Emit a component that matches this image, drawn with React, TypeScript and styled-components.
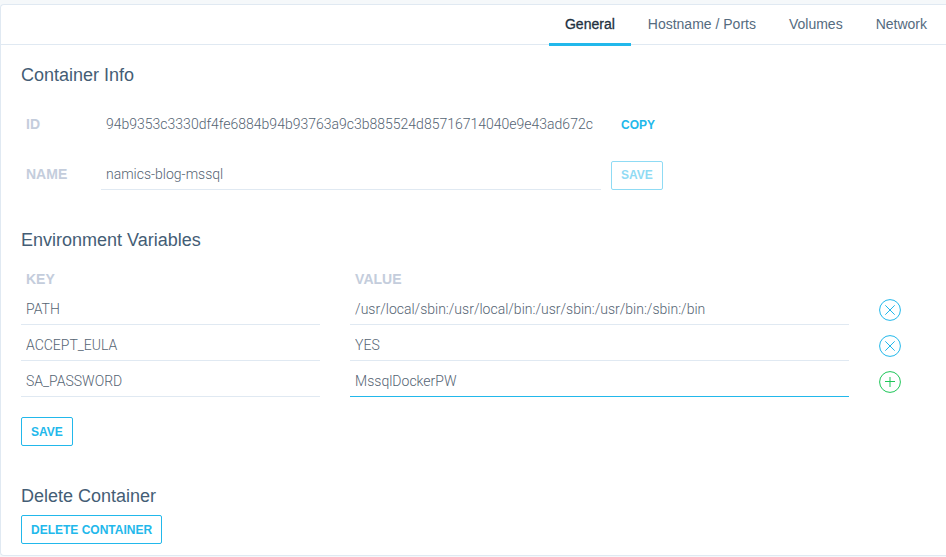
import React, { useState } from "react";
import styled, { createGlobalStyle, css } from "styled-components";

const colors = {
  page: "#f5f8fa",
  line: "#e0e9f2",
  accent: "#22b8eb",
  add: "#1fc659",
  heading: "#445d75",
  label: "#c4cddc",
  text: "#556473",
};

const GlobalStyle = createGlobalStyle`
  *, *::before, *::after { box-sizing: border-box; }
  body {
    margin: 0;
    background: ${colors.page};
    color: ${colors.text};
    font: 14px/20px "Liberation Sans", Arial, sans-serif;
  }
`;

const Card = styled.main`
  margin-top: 4px;
  background: #fff;
  border: 1px solid ${colors.line};
  border-right: 0;
  border-radius: 4px 0 0 4px;
`;

const TabBar = styled.nav`
  display: flex;
  justify-content: flex-end;
  gap: 1px;
  height: 40px;
  padding-right: 3px;
  border-bottom: 1px solid ${colors.line};
`;

const Tab = styled.a<{ $active?: boolean }>`
  height: 41px;
  padding: 9px 16px 0;
  border-bottom: 3px solid ${(p) => (p.$active ? colors.accent : "transparent")};
  color: ${(p) => (p.$active ? "#22313f" : "#556b80")};
  -webkit-text-stroke: ${(p) => (p.$active ? "0.3px" : "0")} currentColor;
  text-decoration: none;
  white-space: nowrap;
`;

const Content = styled.div`
  display: flex;
  flex-direction: column;
  align-items: flex-start;
  padding: 18px 45px 11px 20px;
`;

const Heading = styled.h2`
  margin: 0;
  color: ${colors.heading};
  font-size: 18px;
  font-weight: 400;
  line-height: 24px;
`;

const InfoGrid = styled.div`
  display: grid;
  grid-template-columns: 80px minmax(0, 500px) auto;
  align-items: center;
  row-gap: 21px;
  width: 100%;
  margin: 23px 0 38px;
`;

const labelText = css`
  color: ${colors.label};
  font-size: 14px;
  font-weight: 700;
  line-height: 20px;
  text-align: left;
`;

const Label = styled.label`
  ${labelText}
  padding: 0 0 2px 5px;
`;

const valueText = css`
  color: ${colors.text};
  font-family: Roboto, "Liberation Sans", sans-serif;
  font-size: 14px;
  font-weight: 300;
  line-height: 20px;
`;

const IdValue = styled.output`
  ${valueText}
  padding: 0 5px 2px;
`;

const Field = styled.input`
  ${valueText}
  display: block;
  width: 100%;
  height: 30px;
  padding: 0 5px 2px;
  border: 0;
  border-bottom: 1px solid ${colors.line};
  border-radius: 0;
  background: transparent;
  outline: 0;

  &:focus {
    border-bottom-color: ${colors.accent};
  }
`;

const ActiveField = styled(Field)`
  border-bottom-color: ${colors.accent};
`;

const Button = styled.button<{ $plain?: boolean }>`
  justify-self: start;
  height: 29px;
  padding: 0 9px;
  border: 1px solid ${(p) => (p.$plain ? "transparent" : colors.accent)};
  border-radius: 2px;
  background: transparent;
  color: ${colors.accent};
  font: 700 12px/16px "Liberation Sans", Arial, sans-serif;
  text-transform: uppercase;
  cursor: pointer;

  &:disabled {
    opacity: 0.5;
    cursor: default;
  }

  ${InfoGrid} & {
    margin-left: 10px;
  }
`;

const EnvTable = styled.table`
  width: 100%;
  margin: 17px 0 20px;
  border-collapse: collapse;
  table-layout: fixed;

  th {
    ${labelText}
    height: 20px;
    padding: 0 5px;
  }

  td {
    height: 36px;
    padding: 6px 0 0;
    vertical-align: top;
  }
`;

const KeyHead = styled.th`
  width: 37.4%;
`;

const ActionHead = styled.th`
  width: 52px;
`;

const KeyCell = styled.td`
  && {
    padding-right: 30px;
  }
`;

const ActionCell = styled.td`
  && {
    padding: 10px 0 0 30px;
  }
`;

const IconButton = styled.button<{ $add?: boolean }>`
  display: block;
  width: 22px;
  height: 22px;
  padding: 0;
  border: 0;
  background: transparent;
  color: ${(p) => (p.$add ? colors.add : colors.accent)};
  cursor: pointer;
`;

const DeleteHeading = styled(Heading)`
  margin: 38px 0 7px;
`;

const RoundIcon = ({ add }: { add?: boolean }) => (
  <svg width="22" height="22" viewBox="0 0 22 22" fill="none" stroke="currentColor" aria-hidden="true">
    <circle cx="11" cy="11" r="10.4" strokeWidth="1" />
    <path d={add ? "M6 10.5H16M11 6V16" : "M6.3 6.3L15.7 15.7M15.7 6.3L6.3 15.7"} strokeWidth="1" />
  </svg>
);

const tabs = ["General", "Hostname / Ports", "Volumes", "Network"];

const initialVariables = [
  { key: "PATH", value: "/usr/local/sbin:/usr/local/bin:/usr/sbin:/usr/bin:/sbin:/bin" },
  { key: "ACCEPT_EULA", value: "YES" },
  { key: "SA_PASSWORD", value: "MssqlDockerPW" },
];

export default function App() {
  const [active, setActive] = useState("General");
  const last = initialVariables.length - 1;

  return (
    <>
      <GlobalStyle />
      <Card>
        <TabBar>
          {tabs.map((tab) => (
            <Tab
              key={tab}
              href="#"
              $active={tab === active}
              aria-current={tab === active ? "page" : undefined}
              onClick={(e) => {
                e.preventDefault();
                setActive(tab);
              }}
            >
              {tab}
            </Tab>
          ))}
        </TabBar>
        <Content>
          <Heading>Container Info</Heading>
          <InfoGrid>
            <Label htmlFor="container-id">ID</Label>
            <IdValue id="container-id">94b9353c3330df4fe6884b94b93763a9c3b885524d85716714040e9e43ad672c</IdValue>
            <Button type="button" $plain>Copy</Button>
            <Label htmlFor="container-name">NAME</Label>
            <Field id="container-name" defaultValue="namics-blog-mssql" />
            <Button type="button" disabled>Save</Button>
          </InfoGrid>

          <Heading>Environment Variables</Heading>
          <EnvTable>
            <thead>
              <tr>
                <KeyHead scope="col">KEY</KeyHead>
                <th scope="col">VALUE</th>
                <ActionHead />
              </tr>
            </thead>
            <tbody>
              {initialVariables.map((item, i) => {
                const ValueField = i === last ? ActiveField : Field;
                return (
                  <tr key={item.key}>
                    <KeyCell>
                      <Field aria-label="Key" defaultValue={item.key} />
                    </KeyCell>
                    <td>
                      <ValueField aria-label="Value" defaultValue={item.value} />
                    </td>
                    <ActionCell>
                      <IconButton type="button" $add={i === last} aria-label={i === last ? "Add variable" : "Remove variable"}>
                        <RoundIcon add={i === last} />
                      </IconButton>
                    </ActionCell>
                  </tr>
                );
              })}
            </tbody>
          </EnvTable>
          <Button type="button">Save</Button>

          <DeleteHeading>Delete Container</DeleteHeading>
          <Button type="button">Delete Container</Button>
        </Content>
      </Card>
    </>
  );
}
